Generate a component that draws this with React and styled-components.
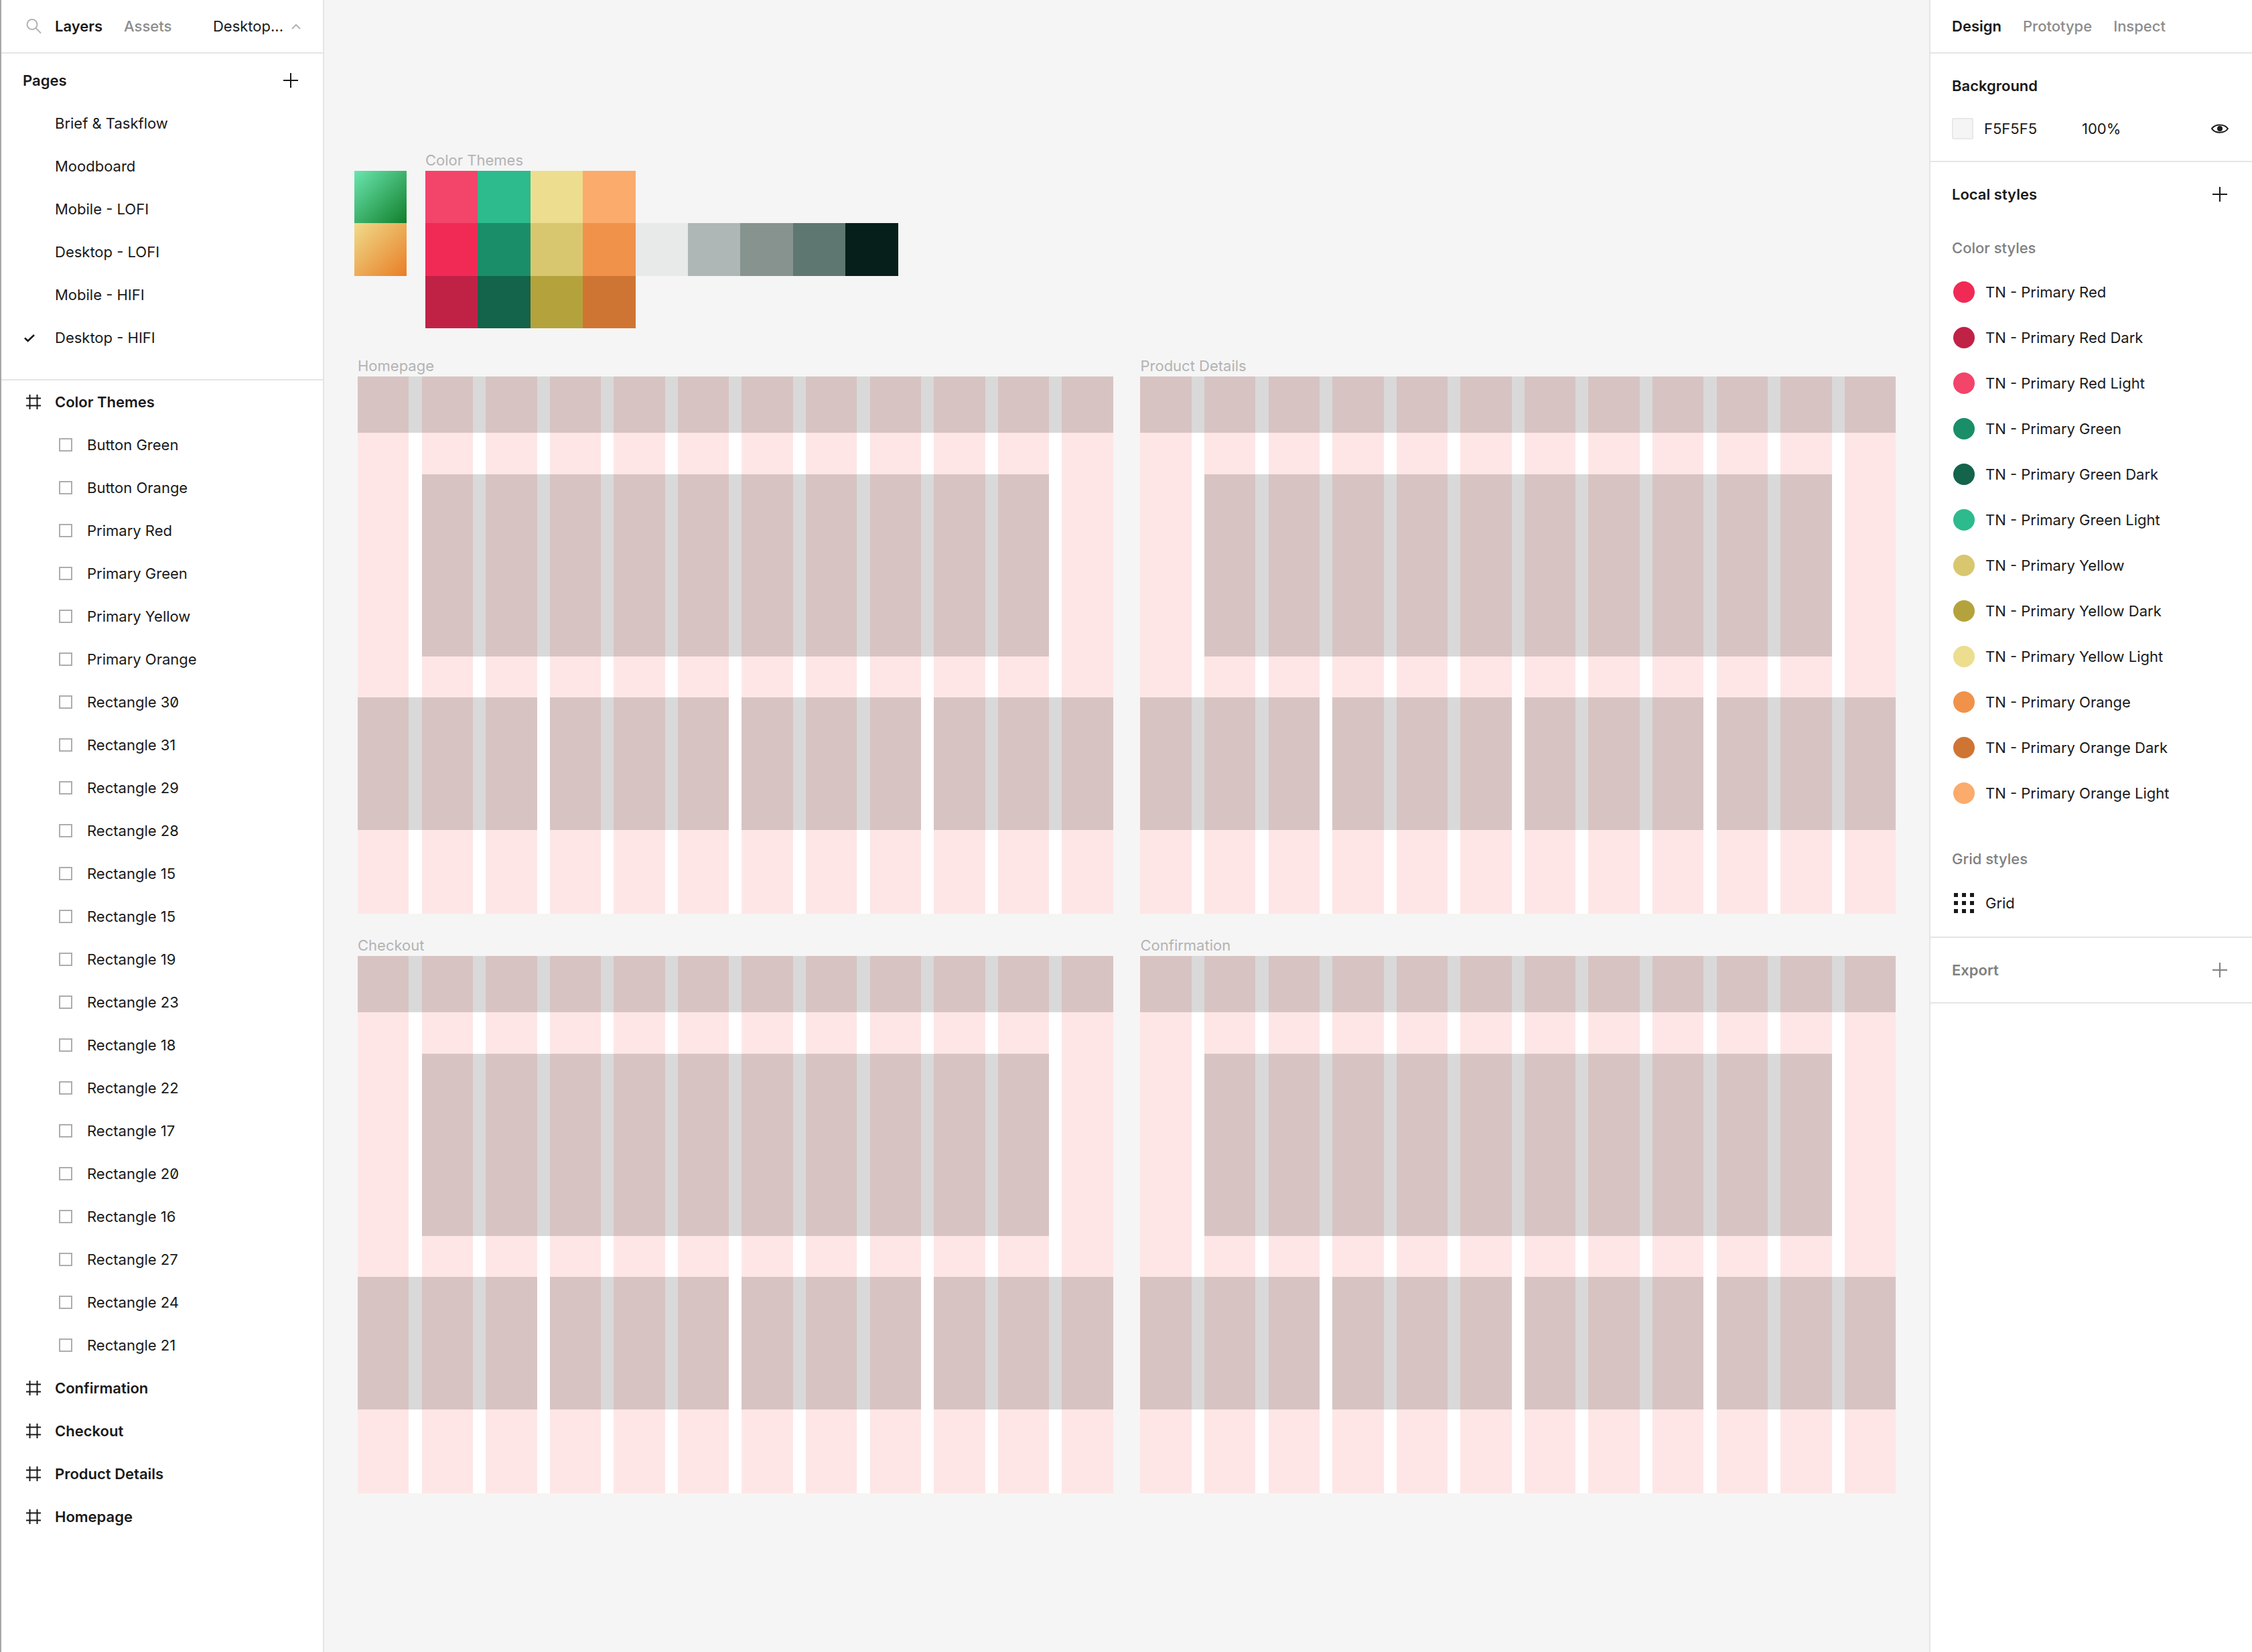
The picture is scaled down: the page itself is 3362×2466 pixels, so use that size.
import React from "react";
import styled, { createGlobalStyle } from "styled-components";

const Global = createGlobalStyle`
  html, body { margin: 0; padding: 0; height: 100%; background: #f5f5f5; overflow: hidden; }
  #root { height: 100%; }
  * { box-sizing: border-box; }
`;

const App_ = styled.div`
  display: flex;
  width: 3362px;
  height: 2466px;
  font-family: Inter, "Liberation Sans", sans-serif;
  font-size: 22px;
  color: #1a1a1a;
  -webkit-font-smoothing: antialiased;
`;

/* ---------- Left panel ---------- */
const LeftPanel = styled.aside`
  flex: none;
  width: 484px;
  background: #fff;
  border-left: 2px solid #a8a8a8;
  border-right: 2px solid #e5e5e5;
  display: flex;
  flex-direction: column;
`;
const LeftHeader = styled.header`
  height: 80px;
  border-bottom: 2px solid #e5e5e5;
  display: flex;
  align-items: center;
  position: relative;
  padding-left: 36px;
`;
const SearchSlot = styled.span`
  display: flex;
  width: 44px;
`;
const Tab = styled.span`
  font-weight: ${(p) => (p.$active ? 600 : 500)};
  color: ${(p) => (p.$active ? "#1a1a1a" : "#8c8c8c")};
  margin-right: ${(p) => p.$mr || 0}px;
`;
const PageSwitch = styled.span`
  margin-left: auto;
  margin-right: 33px;
  display: flex;
  align-items: center;
  gap: 12px;
`;
const PagesHead = styled.div`
  margin-top: 8px;
  height: 64px;
  padding: 0 37px 0 32px;
  display: flex;
  align-items: center;
  justify-content: space-between;
  font-weight: 600;
`;
const PagesList = styled.div`
  padding-bottom: 30px;
  border-bottom: 2px solid #e5e5e5;
`;
const Row = styled.div`
  height: 64px;
  display: flex;
  align-items: center;
  font-weight: ${(p) => (p.$bold ? 600 : 400)};
  font-feature-settings: "zero" 1;
`;
const IconSlot = styled.span`
  flex: none;
  width: ${(p) => p.$w}px;
  padding-left: ${(p) => p.$pl}px;
  display: flex;
  align-items: center;
`;

/* ---------- Canvas ---------- */
const Canvas = styled.main`
  flex: 1;
  min-width: 0;
  background: #f5f5f5;
  padding: 226px 0 0 45px;
`;
const ThemeBlock = styled.section`
  display: grid;
  grid-template-columns: 78px auto;
  grid-template-rows: 29px auto;
  column-gap: 28px;
  width: max-content;
  margin-bottom: 40px;
`;
const CanvasLabel = styled.div`
  font-size: 22px;
  line-height: ${(p) => p.$lh}px;
  color: #b3b3b3;
  grid-column: ${(p) => p.$col || "auto"};
`;
const GradientStack = styled.div`
  grid-column: 1;
  grid-row: 2;
  display: flex;
  flex-direction: column;
`;
const GradientSwatch = styled.div`
  width: 78px;
  height: 78.33px;
  background: ${(p) => p.$bg};
`;
const PaletteGrid = styled.div`
  grid-column: 2;
  grid-row: 2;
  display: flex;
  flex-direction: column;
`;
const PaletteRow = styled.div`
  display: flex;
  height: 78.33px;
`;
const Chip = styled.div`
  width: 78.4px;
  background: ${(p) => p.$bg};
`;
const FrameBoard = styled.div`
  margin-left: 5px;
  display: grid;
  grid-template-columns: 1127.7px 1127.7px;
  column-gap: 40.8px;
  row-gap: 31px;
`;
const Frame = styled.div`
  height: 802px;
  background: #fff;
  display: grid;
  grid-template-columns: repeat(12, 1fr);
  column-gap: 19.2px;
  grid-template-rows: 84px 62px 272px 61px 198px 125px;
`;
const GridColumn = styled.div`
  grid-row: 1 / -1;
  grid-column: ${(p) => p.$n};
  background: #fee6e6;
`;
const Block = styled.div`
  grid-row: ${(p) => p.$row};
  grid-column: ${(p) => p.$col};
  background: rgba(0, 0, 0, 0.15);
`;

/* ---------- Right panel ---------- */
const RightPanel = styled.aside`
  flex: none;
  width: 482px;
  background: #fff;
  border-left: 2px solid #e5e5e5;
  display: flex;
  flex-direction: column;
`;
const RightHeader = styled.header`
  height: 80px;
  border-bottom: 2px solid #e5e5e5;
  display: flex;
  align-items: center;
  padding-left: 32px;
`;
const Section = styled.section`
  padding: 16px 0 16px 32px;
  border-bottom: 2px solid #e5e5e5;
`;
const SectionHead = styled.div`
  height: 64px;
  padding-right: 37px;
  display: flex;
  align-items: center;
  justify-content: space-between;
  font-weight: 600;
  color: ${(p) => (p.$muted ? "#808080" : "#1a1a1a")};
`;
const BgRow = styled.div`
  height: 64px;
  padding-right: 35px;
  display: flex;
  align-items: center;
`;
const BgSwatch = styled.span`
  width: 32px;
  height: 32px;
  background: #f5f5f5;
  border: 2px solid #e8e8e8;
  border-radius: 2px;
  margin-right: 16px;
`;
const BgValue = styled.span`
  width: 146px;
`;
const EyeSlot = styled.span`
  margin-left: auto;
  display: flex;
`;
const SubHead = styled.div`
  height: 64px;
  margin-top: ${(p) => p.$mt}px;
  display: flex;
  align-items: center;
  font-weight: 500;
  color: #808080;
`;
const StyleRow = styled.div`
  height: 68px;
  display: flex;
  align-items: center;
`;
const Dot = styled.span`
  flex: none;
  width: 32px;
  height: 32px;
  border-radius: 50%;
  margin: 0 16px 0 2px;
  background: ${(p) => p.$bg};
`;
const GridIconSlot = styled.span`
  flex: none;
  display: flex;
  margin: 0 17px 0 3px;
`;

/* ---------- Icons ---------- */
const SearchIcon = () => (
  <svg width="24" height="24" viewBox="0 0 24 24" fill="none" stroke="#b3b3b3" strokeWidth="2">
    <circle cx="10" cy="9.5" r="7.5" />
    <path d="M15.5 15 L23 22.5" />
  </svg>
);
const Chevron = () => (
  <svg width="14" height="9" viewBox="0 0 14 9" fill="none" stroke="#b3b3b3" strokeWidth="2">
    <path d="M1 8 L7 2 L13 8" />
  </svg>
);
const Plus = ({ color = "#1a1a1a" }) => (
  <svg width="22" height="22" viewBox="0 0 22 22" fill="none" stroke={color} strokeWidth="2">
    <path d="M11 0 V22 M0 11 H22" />
  </svg>
);
const Check = () => (
  <svg width="16" height="13" viewBox="0 0 16 13" fill="none" stroke="#1a1a1a" strokeWidth="2.6">
    <path d="M1 6.5 L5.6 11 L15 2" />
  </svg>
);
const Hash = () => (
  <svg width="22" height="22" viewBox="0 0 22 22" fill="none" stroke="#1a1a1a" strokeWidth="2">
    <path d="M5.5 0 V22 M16.5 0 V22 M0 5.5 H22 M0 16.5 H22" />
  </svg>
);
const RectIcon = () => (
  <svg width="20" height="20" viewBox="0 0 20 20" fill="none" stroke="#adadad" strokeWidth="2">
    <rect x="1" y="1" width="18" height="18" />
  </svg>
);
const Eye = () => (
  <svg width="26" height="16" viewBox="0 0 26 16" fill="none" stroke="#1a1a1a" strokeWidth="2">
    <path d="M1 8 C6 0.5 20 0.5 25 8 C20 15.5 6 15.5 1 8 Z" />
    <circle cx="13" cy="8" r="4" fill="#1a1a1a" stroke="none" />
  </svg>
);
const GridDots = () => (
  <svg width="30" height="30" viewBox="0 0 30 30" fill="#1a1a1a">
    {[0, 12, 24].flatMap((y) =>
      [0, 12, 24].map((x) => <rect key={`${x}-${y}`} x={x} y={y} width="6" height="6" />)
    )}
  </svg>
);

/* ---------- Data ---------- */
const pages = ["Brief & Taskflow", "Moodboard", "Mobile - LOFI", "Desktop - LOFI", "Mobile - HIFI", "Desktop - HIFI"];
const children = [
  "Button Green", "Button Orange", "Primary Red", "Primary Green", "Primary Yellow", "Primary Orange",
  "Rectangle 30", "Rectangle 31", "Rectangle 29", "Rectangle 28", "Rectangle 15", "Rectangle 15",
  "Rectangle 19", "Rectangle 23", "Rectangle 18", "Rectangle 22", "Rectangle 17", "Rectangle 20",
  "Rectangle 16", "Rectangle 27", "Rectangle 24", "Rectangle 21",
];
const frames = ["Homepage", "Product Details", "Checkout", "Confirmation"];
const palette = [
  ["#f34469", "#2dba8c", "#eddd8e", "#fbab6b"],
  ["#f12a55", "#1a8e68", "#d8c76e", "#f0924a", "#e7eae9", "#aeb7b5", "#86938f", "#5e7871", "#071f1b"],
  ["#c02246", "#14634b", "#b4a33c", "#cf7533"],
];
const styles = [
  ["TN - Primary Red", "#f12a55"],
  ["TN - Primary Red Dark", "#c02246"],
  ["TN - Primary Red Light", "#f34469"],
  ["TN - Primary Green", "#1a8e68"],
  ["TN - Primary Green Dark", "#14634b"],
  ["TN - Primary Green Light", "#2dba8c"],
  ["TN - Primary Yellow", "#d8c76e"],
  ["TN - Primary Yellow Dark", "#b4a33c"],
  ["TN - Primary Yellow Light", "#eddd8e"],
  ["TN - Primary Orange", "#f0924a"],
  ["TN - Primary Orange Dark", "#cf7533"],
  ["TN - Primary Orange Light", "#fbab6b"],
];

const WireFrame = () => (
  <Frame>
    {Array.from({ length: 12 }, (_, i) => (
      <GridColumn key={i} $n={i + 1} />
    ))}
    <Block $row="1" $col="1 / -1" />
    <Block $row="3" $col="2 / 12" />
    <Block $row="5" $col="1 / 4" />
    <Block $row="5" $col="4 / 7" />
    <Block $row="5" $col="7 / 10" />
    <Block $row="5" $col="10 / 13" />
  </Frame>
);

export default function App() {
  return (
    <App_>
      <Global />
      <LeftPanel>
        <LeftHeader>
          <SearchSlot><SearchIcon /></SearchSlot>
          <Tab $active $mr={32}>Layers</Tab>
          <Tab>Assets</Tab>
          <PageSwitch>Desktop... <Chevron /></PageSwitch>
        </LeftHeader>
        <PagesHead>Pages <Plus /></PagesHead>
        <PagesList>
          {pages.map((p, i) => (
            <Row key={p}>
              <IconSlot $w={80} $pl={34}>{i === 5 && <Check />}</IconSlot>
              {p}
            </Row>
          ))}
        </PagesList>
        <Row $bold>
          <IconSlot $w={80} $pl={37}><Hash /></IconSlot>
          Color Themes
        </Row>
        {children.map((c, i) => (
          <Row key={i}>
            <IconSlot $w={128} $pl={86}><RectIcon /></IconSlot>
            {c}
          </Row>
        ))}
        {["Confirmation", "Checkout", "Product Details", "Homepage"].map((f) => (
          <Row $bold key={f}>
            <IconSlot $w={80} $pl={37}><Hash /></IconSlot>
            {f}
          </Row>
        ))}
      </LeftPanel>

      <Canvas>
        <ThemeBlock>
          <CanvasLabel $lh={26} $col="2">Color Themes</CanvasLabel>
          <GradientStack>
            <GradientSwatch $bg="linear-gradient(135deg, #6be6b0 0%, #117f2a 100%)" />
            <GradientSwatch $bg="linear-gradient(135deg, #efdc8b 0%, #e97d25 100%)" />
          </GradientStack>
          <PaletteGrid>
            {palette.map((r, i) => (
              <PaletteRow key={i}>
                {r.map((c) => <Chip key={c} $bg={c} />)}
              </PaletteRow>
            ))}
          </PaletteGrid>
        </ThemeBlock>
        <FrameBoard>
          {frames.map((f) => (
            <div key={f}>
              <CanvasLabel $lh={32}>{f}</CanvasLabel>
              <WireFrame />
            </div>
          ))}
        </FrameBoard>
      </Canvas>

      <RightPanel>
        <RightHeader>
          <Tab $active $mr={32}>Design</Tab>
          <Tab $mr={32}>Prototype</Tab>
          <Tab>Inspect</Tab>
        </RightHeader>
        <Section>
          <SectionHead>Background</SectionHead>
          <BgRow>
            <BgSwatch />
            <BgValue>F5F5F5</BgValue>
            <span>100%</span>
            <EyeSlot><Eye /></EyeSlot>
          </BgRow>
        </Section>
        <Section>
          <SectionHead>Local styles <Plus /></SectionHead>
          <SubHead $mt={16}>Color styles</SubHead>
          {styles.map(([n, c]) => (
            <StyleRow key={n}><Dot $bg={c} />{n}</StyleRow>
          ))}
          <SubHead $mt={32}>Grid styles</SubHead>
          <StyleRow><GridIconSlot><GridDots /></GridIconSlot>Grid</StyleRow>
        </Section>
        <Section>
          <SectionHead $muted>Export <Plus color="#808080" /></SectionHead>
        </Section>
      </RightPanel>
    </App_>
  );
}
